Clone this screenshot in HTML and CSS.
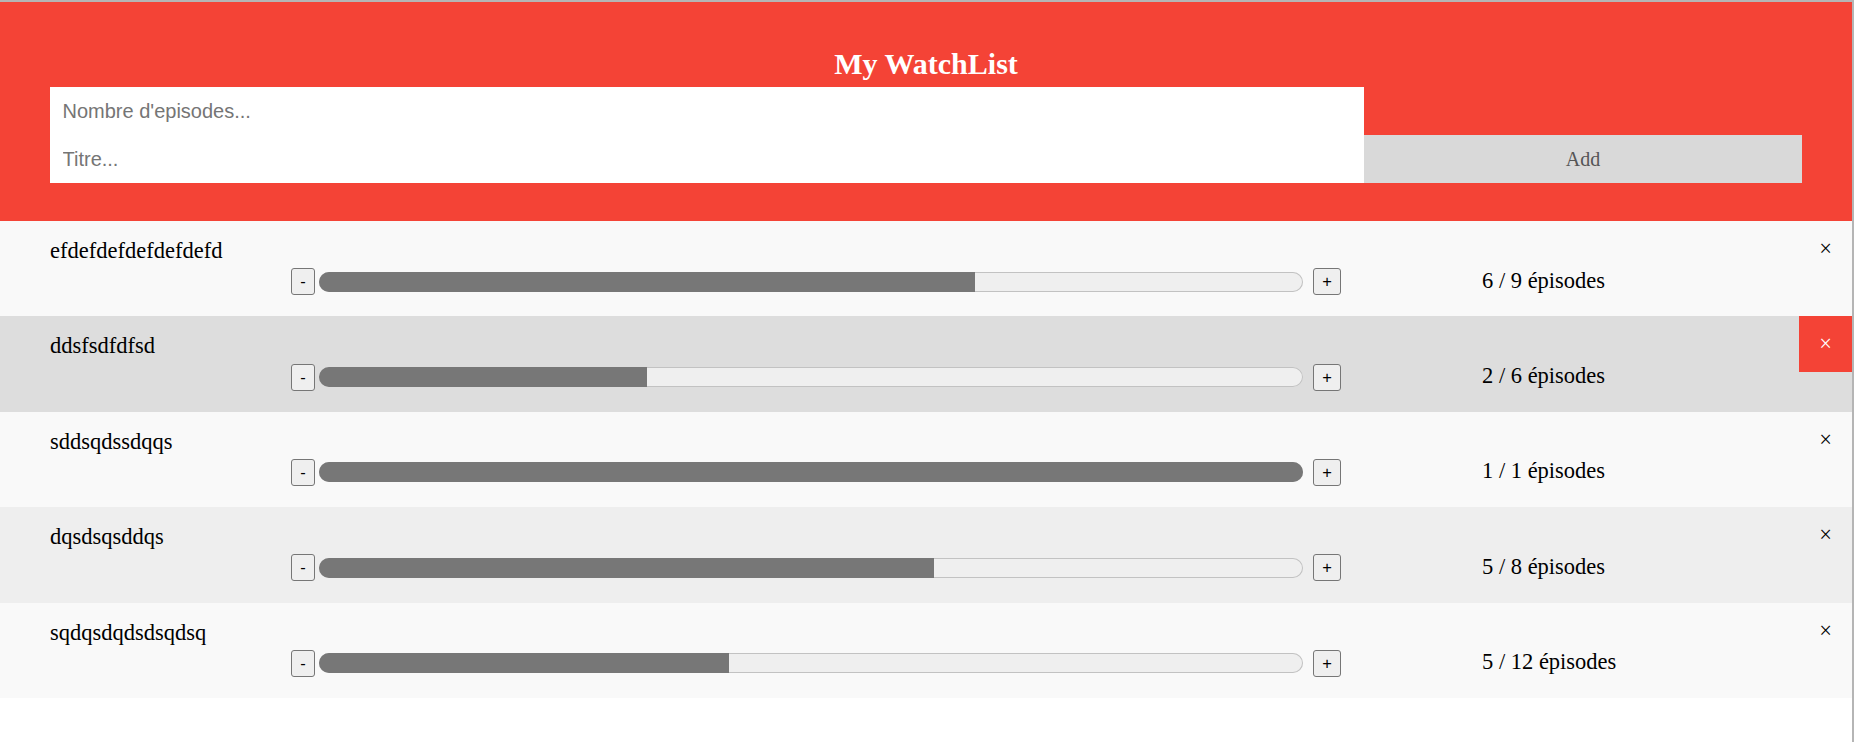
FILE: index.html
```html
<!DOCTYPE html>
<html lang="fr">
<head>
    <meta charset="UTF-8">
    <meta name="viewport" content="width=device-width, initial-scale=1.0">
    <title>My WatchList</title>
    <link rel="stylesheet" href="styles.css">
</head>
<body>
    <div class="header">
        <h2 class="title">My WatchList</h2>
        <div class="add-form">
            <input class="field field-episodes" type="text" placeholder="Nombre d'episodes...">
            <input class="field field-title" type="text" placeholder="Titre...">
            <span class="add-btn">Add</span>
        </div>
    </div>

    <ul class="watchlist">
        <li class="show">
            <div class="show-title">efdefdefdefdefdefd</div>
            <div class="controls">
                <button class="step-btn minus">-</button>
                <div class="progress"><div class="progress-value" style="width: 66.667%"></div></div>
                <button class="step-btn plus">+</button>
                <span class="count">6 / 9 épisodes</span>
            </div>
            <span class="close">×</span>
        </li>
        <li class="show hover">
            <div class="show-title">ddsfsdfdfsd</div>
            <div class="controls">
                <button class="step-btn minus">-</button>
                <div class="progress"><div class="progress-value" style="width: 33.333%"></div></div>
                <button class="step-btn plus">+</button>
                <span class="count">2 / 6 épisodes</span>
            </div>
            <span class="close active">×</span>
        </li>
        <li class="show">
            <div class="show-title">sddsqdssdqqs</div>
            <div class="controls">
                <button class="step-btn minus">-</button>
                <div class="progress"><div class="progress-value" style="width: 100%"></div></div>
                <button class="step-btn plus">+</button>
                <span class="count">1 / 1 épisodes</span>
            </div>
            <span class="close">×</span>
        </li>
        <li class="show">
            <div class="show-title">dqsdsqsddqs</div>
            <div class="controls">
                <button class="step-btn minus">-</button>
                <div class="progress"><div class="progress-value" style="width: 62.5%"></div></div>
                <button class="step-btn plus">+</button>
                <span class="count">5 / 8 épisodes</span>
            </div>
            <span class="close">×</span>
        </li>
        <li class="show">
            <div class="show-title">sqdqsdqdsdsqdsq</div>
            <div class="controls">
                <button class="step-btn minus">-</button>
                <div class="progress"><div class="progress-value" style="width: 41.667%"></div></div>
                <button class="step-btn plus">+</button>
                <span class="count">5 / 12 épisodes</span>
            </div>
            <span class="close">×</span>
        </li>
    </ul>
</body>
</html>
```

FILE: styles.css
```css
html {
    background: #fff;
}

body {
    margin: 0;
    min-height: 100vh;
    box-sizing: border-box;
    border-top: 2px solid #b5b5b5;
    border-right: 2px solid #b5b5b5;
    font-family: "Liberation Serif", "Times New Roman", serif;
    color: #000;
}

/* header with the add form */
.header {
    background-color: #f44336;
    padding: 38px 50px;
    color: #fff;
    text-align: center;
}

.title {
    margin: 6px;
    font-size: 30px;
    line-height: 35px;
    font-weight: bold;
}

.add-form {
    display: grid;
    grid-template-columns: 3fr 1fr;
    grid-template-rows: 48px 48px;
}

.field {
    margin: 0;
    border: none;
    border-radius: 0;
    padding: 0 12.5px;
    height: 48px;
    box-sizing: border-box;
    font-family: "Liberation Sans", Arial, sans-serif;
    font-size: 20px;
    background: #fff;
    outline: none;
}

.field::placeholder {
    color: #757575;
}

.field-episodes {
    grid-column: 1;
    grid-row: 1;
}

.field-title {
    grid-column: 1;
    grid-row: 2;
}

.add-btn {
    grid-column: 2;
    grid-row: 2;
    display: flex;
    align-items: center;
    justify-content: center;
    background: #d9d9d9;
    color: #555;
    font-size: 20px;
    cursor: pointer;
}

/* list */
.watchlist {
    margin: 0;
    padding: 0;
    list-style: none;
}

.show {
    position: relative;
    padding: 15px 10px 15px 50px;
    background: #eee;
    font-size: 22.5px;
}

.show:nth-child(odd) {
    background: #f9f9f9;
}

.show.hover {
    background: #ddd;
}

.show-title {
    line-height: 30px;
    margin-bottom: -4px;
}

.controls {
    display: flex;
    align-items: center;
    height: 39.4px;
    padding-left: 241px;
}

.step-btn {
    display: flex;
    align-items: center;
    justify-content: center;
    height: 27px;
    padding: 0;
    box-sizing: border-box;
    background: #efefef;
    border: 1px solid #767676;
    border-radius: 3px;
    font-family: "Liberation Sans", Arial, sans-serif;
    font-size: 16.5px;
    color: #000;
}

.step-btn.minus {
    width: 24px;
}

.step-btn.plus {
    width: 28px;
    margin-left: 10px;
}

.progress {
    width: 984px;
    height: 20px;
    margin-left: 4px;
    border-radius: 10px;
    background: #efefef;
    box-shadow: inset 0 0 0 1px #c2c2c2;
    overflow: hidden;
}

.progress-value {
    height: 100%;
    background: #777;
}

.count {
    margin-left: 141px;
    margin-bottom: 2px;
    line-height: 26px;
}

.close {
    position: absolute;
    right: 0;
    top: 0;
    padding: 15px 20px;
    line-height: 26px;
    cursor: pointer;
}

.close.active {
    background-color: #f44336;
    color: #fff;
}
```
